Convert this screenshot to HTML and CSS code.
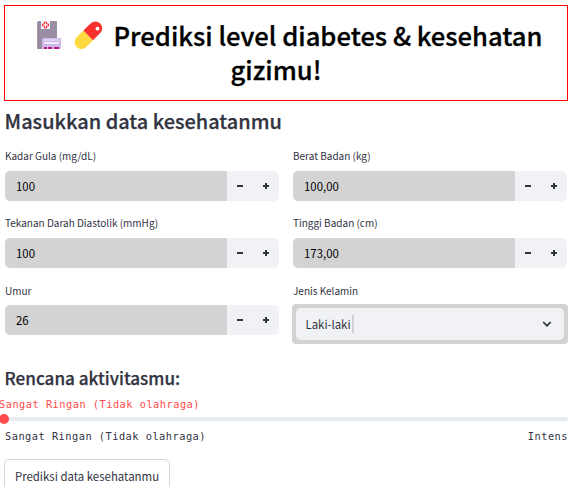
FILE: index.html
```html
<!DOCTYPE html>
<html lang="id">
<head>
<meta charset="utf-8">
<title>Prediksi level diabetes</title>
<link rel="stylesheet" href="styles.css">
</head>
<body>
<main class="page">
  <h1 class="title">
    <span class="line first"><svg class="emoji" viewBox="0 0 67 30" width="67" height="30" aria-hidden="true">
      <path fill="#998ea4" d="M2.5 1H20a1 1 0 0 1 1 1v27H1.5V2a1 1 0 0 1 1-1z"/>
      <path fill="#83798e" d="M1.5 2h1v27h-1z"/>
      <path fill="#f5f3fa" d="M5 1h9v8H5z"/>
      <path fill="#fff" stroke="#f8313b" stroke-width="1" d="M8.5 2h2v2h2v2h-2v2h-2V6h-2V4h2z"/>
      <path fill="#cdb9ea" d="M7 18h17a1 1 0 0 1 1 1v10H6V19a1 1 0 0 1 1-1z"/>
      <path fill="#f0e9fb" d="M8 19.5h15v1H8zM8 22h15v2H8z"/>
      <path fill="#ba1781" d="M8 27h3v2H8zM12 27h4v2h-4zM18 27h5v2h-5z"/>
      <g transform="rotate(-45 52.6 15)">
        <path fill="#fdd83e" d="M52 8.2H42.4a6.8 6.8 0 0 0 0 13.6H52z"/>
        <path fill="#f8312f" d="M52 8.2h10.2a6.8 6.8 0 0 1 0 13.6H52z"/>
      </g>
      <circle cx="61.5" cy="8.7" r="1.9" fill="#fff"/>
    </svg><span class="t1">Prediksi level diabetes &amp; kesehatan</span></span>
    <span class="line"><span class="t2">gizimu!</span></span>
  </h1>
  <h2 class="heading">Masukkan data kesehatanmu</h2>
  <form class="grid">
    <div class="field"><label class="label">Kadar Gula (mg/dL)</label>
      <div class="number"><span class="value">100</span><span class="step minus"></span><span class="step plus"></span></div></div>
    <div class="field"><label class="label">Berat Badan (kg)</label>
      <div class="number"><span class="value">100,00</span><span class="step minus"></span><span class="step plus"></span></div></div>
    <div class="field"><label class="label">Tekanan Darah Diastolik (mmHg)</label>
      <div class="number"><span class="value">100</span><span class="step minus"></span><span class="step plus"></span></div></div>
    <div class="field"><label class="label">Tinggi Badan (cm)</label>
      <div class="number"><span class="value">173,00</span><span class="step minus"></span><span class="step plus"></span></div></div>
    <div class="field last"><label class="label">Umur</label>
      <div class="number"><span class="value">26</span><span class="step minus"></span><span class="step plus"></span></div></div>
    <div class="field last"><label class="label">Jenis Kelamin</label>
      <div class="select"><span class="choice">Laki-laki</span><span class="caret"></span>
        <svg class="chevron" viewBox="0 0 10 6" width="10" height="6" aria-hidden="true"><path d="M1.2 1l3.8 3.7L8.8 1" fill="none" stroke="#31333f" stroke-width="1.7"/></svg></div></div>
  </form>
  <h3 class="subheading">Rencana aktivitasmu:</h3>
  <section class="slider">
    <div class="current">Sangat Ringan (Tidak olahraga)</div>
    <div class="track"><span class="thumb"></span></div>
    <div class="ends"><span>Sangat Ringan (Tidak olahraga)</span><span class="end">Intens</span></div>
  </section>
  <button class="submit" type="button">Prediksi data kesehatanmu</button>
</main>
</body>
</html>
```
FILE: styles.css
```css
* { box-sizing: border-box; }
body {
  margin: 0;
  height: 487px;
  overflow: hidden;
  background: #fff;
  color: #31333f;
  font-family: "Noto Sans CJK SC", "Noto Sans", sans-serif;
}
.page { padding: 5px 14px 0 4px; }
.title {
  margin: 0;
  height: 96px;
  padding: 12px 0 0;
  border: 1px solid #f00;
  color: #000;
  font-size: 25.6px;
  font-weight: 500;
  line-height: 34px;
  -webkit-text-stroke: 0.3px #000;
}
.line { display: flex; justify-content: center; height: 34px; white-space: nowrap; }
.first { justify-content: flex-start; padding-left: 31px; }
.emoji { flex: none; margin: 2px 10.5px 0 0; }
.t2 { margin-right: 20px; }
.heading {
  margin: 5px 0 0 0.6px;
  font-size: 19.95px;
  line-height: 30px;
  font-weight: 500;
  white-space: nowrap;
  -webkit-text-stroke: 0.25px #31333f;
}
.grid {
  display: grid;
  grid-template-columns: 274px 274px;
  column-gap: 14px;
  grid-template-rows: 67px 67px 66px;
  margin: 12px 0 0 1px;
}
.label {
  display: block;
  height: 16px;
  margin-bottom: 7px;
  font-size: 10px;
  line-height: 16px;
  white-space: nowrap;
}
.last .label { margin-top: 1px; margin-bottom: 6px; }
.number {
  display: flex;
  width: 274px;
  height: 30px;
  overflow: hidden;
  border-radius: 5px;
  background: #f0f2f6;
}
.value {
  width: 222px;
  padding-left: 11px;
  background: #d3d3d3;
  border-radius: 0 1px 1px 0;
  color: #000;
  font-size: 11.4px;
  line-height: 30px;
}
.step { display: grid; place-items: center; width: 26px; height: 30px; }
.step::before, .step::after { grid-area: 1 / 1; background: #31333f; }
.step::before { content: ""; width: 6px; height: 2px; }
.plus::after { content: ""; width: 2px; height: 6px; }
.select {
  display: flex;
  align-items: center;
  position: relative;
  width: 276px;
  height: 40px;
  margin: -1px 0 0 -1px;
  padding: 0 16px 0 13.5px;
  border-radius: 4px;
  background: #d3d3d3;
  font-size: 11.4px;
}
.select::before {
  content: "";
  position: absolute;
  inset: 4px;
  border-radius: 5px;
  background: #f0f2f6;
}
.choice, .caret, .chevron { position: relative; }
.caret { width: 2px; height: 18px; margin: 0 0 0 1px; background: #d3d3d3; }
.chevron { margin-left: auto; }
.subheading {
  margin: 17px 0 0 0.6px;
  font-size: 17.1px;
  line-height: 26px;
  font-weight: 500;
  white-space: nowrap;
  -webkit-text-stroke: 0.25px #31333f;
}
.slider {
  margin-left: 1px;
  font-family: "DejaVu Sans Mono", monospace;
  font-size: 10.3px;
  letter-spacing: 0.5px;
  line-height: 16px;
  white-space: nowrap;
}
.current { margin: 5px 0 0 -6px; color: #ff4b4b; }
.track {
  height: 4px;
  margin-top: 5px;
  margin-left: -5px;
  border-radius: 2px;
  background: #e6eaf1;
  position: relative;
}
.thumb {
  position: absolute;
  left: -1px;
  top: -3px;
  width: 10px;
  height: 10px;
  border-radius: 50%;
  background: #ff4b4b;
}
.ends { display: flex; justify-content: space-between; margin-top: 7px; }
.submit {
  display: block;
  width: 166px;
  height: 34px;
  margin: 15px 0 0;
  padding: 0 0 1px;
  border: 1px solid #d6d6d9;
  border-radius: 5px;
  background: #fff;
  color: #31333f;
  font: 11.45px/30px "Noto Sans CJK SC", sans-serif;
  white-space: nowrap;
}
```
